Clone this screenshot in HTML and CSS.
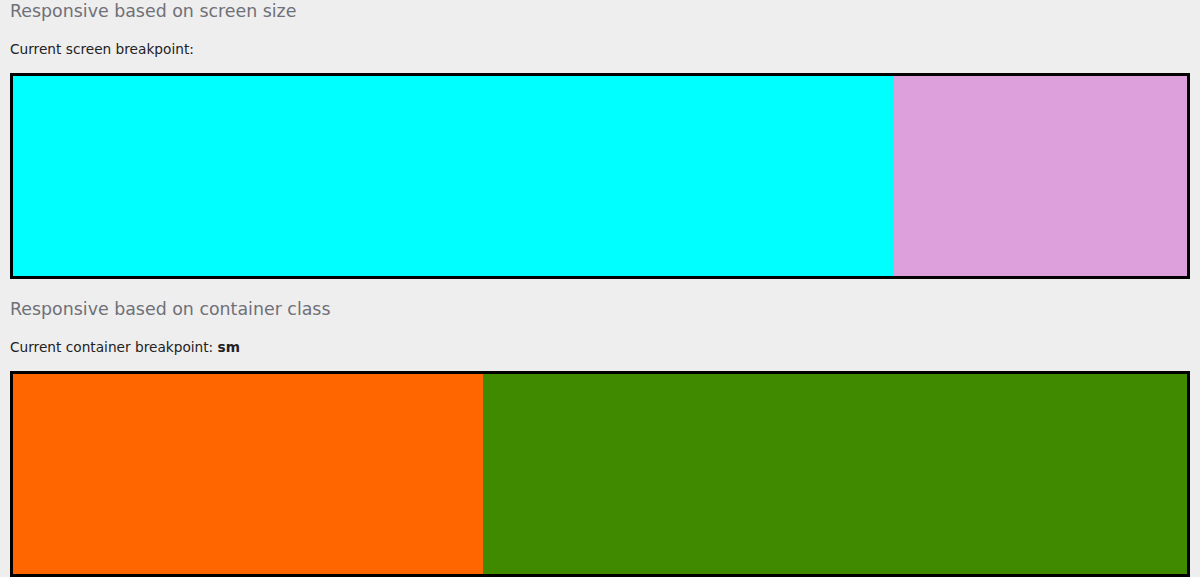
FILE: index.html
```html
<!DOCTYPE html>
<html>
<head>
<meta charset="utf-8">
<link rel="stylesheet" href="styles.css">
</head>
<body>
<section class="demo">
  <h2 class="title">Responsive based on screen size</h2>
  <p class="label">Current screen breakpoint:</p>
  <div class="frame">
    <div class="cell cyan" style="flex-basis:75%"></div>
    <div class="cell plum" style="flex-basis:25%"></div>
  </div>
</section>
<section class="demo">
  <h2 class="title">Responsive based on container class</h2>
  <p class="label">Current container breakpoint: <b>sm</b></p>
  <div class="frame">
    <div class="cell orange" style="flex-basis:40%"></div>
    <div class="cell green" style="flex-basis:60%"></div>
  </div>
</section>
</body>
</html>
```
FILE: styles.css
```css
html, body {
  margin: 0;
  padding: 0;
  background: #eeeeee;
}
body {
  padding: 0 10px;
  font-family: "DejaVu Sans", "Noto Sans", sans-serif;
  color: #222;
}
.demo {
  height: 298px;
  display: flex;
  flex-direction: column;
}
.title {
  margin: 0;
  font-size: 17.4px;
  font-weight: 400;
  line-height: 22px;
  color: #707078;
}
.label {
  margin: 18px 0 0;
  font-size: 13.7px;
  line-height: 18px;
}
.label b {
  font-weight: 700;
}
.frame {
  margin-top: 15px;
  height: 200px;
  border: 3px solid #000;
  display: flex;
}
.cell {
  flex-grow: 0;
  flex-shrink: 0;
}
.cyan { background: #00ffff; }
.plum { background: #dda0dd; }
.orange { background: #ff6600; }
.green { background: #408a00; }
```
